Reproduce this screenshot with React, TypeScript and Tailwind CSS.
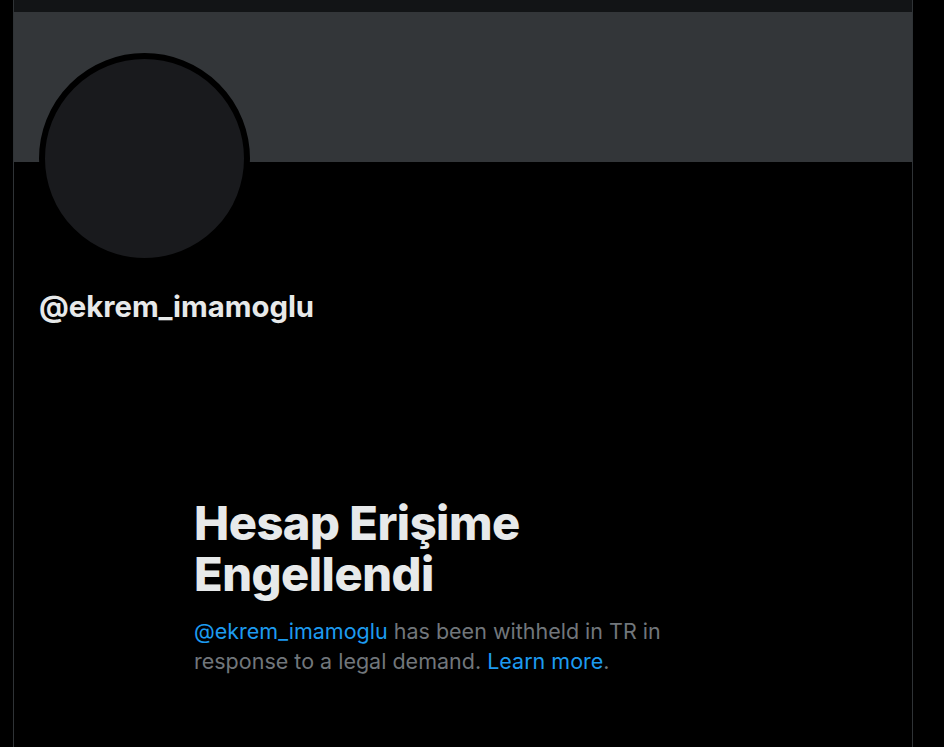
export default function App() {
  return (
    <div className="flex h-[747px] w-[944px] overflow-hidden bg-black" style={{ fontFamily: 'Inter, "Noto Sans", sans-serif' }}>
      <div className="w-[13px] shrink-0" />

      {/* Profile column */}
      <main className="flex w-[900px] shrink-0 flex-col border-x border-[#2f3336]">
        <div className="h-[12px] bg-[#121416]" />
        <div className="h-[150px] bg-[#333639]" />

        {/* Avatar */}
        <div className="-mt-[109px] ml-[25px] h-[211px] w-[211px] rounded-full border-[6px] border-black bg-[#191a1d]" />

        <h1 className="ml-[25px] mt-[26px] text-[29.3px] font-bold leading-[34px] text-[#e7e9ea]">@ekrem_imamoglu</h1>

        {/* Withheld notice */}
        <section className="ml-[180px] mt-[173px] w-[480px]">
          <h2 className="text-[47px] font-extrabold leading-[51px] tracking-[-0.5px] text-[#e7e9ea]">
            Hesap Erişime Engellendi
          </h2>
          <p className="mt-[17px] text-[21.5px] leading-[30px] text-[#71767b]">
            <a href="#" className="text-[#1d9bf0]">@ekrem_imamoglu</a> has been withheld in TR in response to a legal demand.{' '}
            <a href="#" className="text-[#1d9bf0]">Learn more</a>.
          </p>
        </section>
      </main>
    </div>
  )
}
